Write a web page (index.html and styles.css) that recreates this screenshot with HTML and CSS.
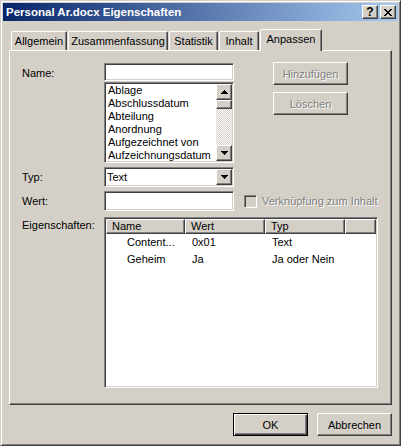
FILE: index.html
```html
<!DOCTYPE html>
<html lang="de">
<head>
    <meta charset="UTF-8">
    <title>Personal Ar.docx Eigenschaften</title>
    <link rel="stylesheet" href="styles.css">
</head>
<body>

<div class="window">

    <div class="titlebar">
        <span class="title">Personal Ar.docx Eigenschaften</span>
        <div class="caption-btns">
            <span class="cap-btn raised">?</span>
            <span class="cap-btn raised">
                <svg width="8" height="7" viewBox="0 0 8 7"><path d="M0 0h2v1H0zM6 0h2v1H6zM1 1h2v1H1zM5 1h2v1H5zM2 2h4v1H2zM3 3h2v1H3zM2 4h4v1H2zM1 5h2v1H1zM5 5h2v1H5zM0 6h2v1H0zM6 6h2v1H6z" fill="#000"/></svg>
            </span>
        </div>
    </div>

    <div class="dialog">

        <!-- Registerkarten -->
        <div class="tabs">
            <div class="tab" style="width:56px">Allgemein</div>
            <div class="tab" style="width:100px">Zusammenfassung</div>
            <div class="tab" style="width:49px">Statistik</div>
            <div class="tab" style="width:40px">Inhalt</div>
            <div class="tab active" style="width:62px">Anpassen</div>
        </div>

        <div class="panel">

            <div class="name-block">
                <div class="label name-label">Name:</div>
                <div class="name-col">
                    <div class="field sunken name-field"></div>
                    <div class="listbox sunken">
                        <ul class="list-items">
                            <li>Ablage</li>
                            <li>Abschlussdatum</li>
                            <li>Abteilung</li>
                            <li>Anordnung</li>
                            <li>Aufgezeichnet von</li>
                            <li>Aufzeichnungsdatum</li>
                        </ul>
                        <div class="vscroll">
                            <div class="sb-btn raised">
                                <svg width="7" height="4" viewBox="0 0 7 4"><path d="M3 0h1v1h1v1h1v1h1v1H0V3h1V2h1V1h1z" fill="#000"/></svg>
                            </div>
                            <div class="sb-thumb raised"></div>
                            <div class="sb-track"></div>
                            <div class="sb-btn raised">
                                <svg width="7" height="4" viewBox="0 0 7 4"><path d="M0 0h7v1H6v1H5v1H4v1H3V3H2V2H1V1H0z" fill="#000"/></svg>
                            </div>
                        </div>
                    </div>
                </div>
                <div class="side-btns">
                    <button class="btn raised" disabled>Hinzufügen</button>
                    <button class="btn raised" disabled>Löschen</button>
                </div>
            </div>

            <div class="row">
                <div class="label">Typ:</div>
                <div class="select sunken">
                    <span class="select-value">Text</span>
                    <span class="sb-btn raised">
                        <svg width="7" height="4" viewBox="0 0 7 4"><path d="M0 0h7v1H6v1H5v1H4v1H3V3H2V2H1V1H0z" fill="#000"/></svg>
                    </span>
                </div>
            </div>

            <div class="row">
                <div class="label">Wert:</div>
                <div class="field sunken wert-field"></div>
                <span class="checkbox sunken"></span>
                <span class="disabled-text">Verknüpfung zum Inhalt</span>
            </div>

            <div class="row props-row">
                <div class="label props-label">Eigenschaften:</div>
                <div class="listview sunken">
                    <div class="lv-header">
                        <div class="lv-col raised col-name">Name</div>
                        <div class="lv-col raised col-wert">Wert</div>
                        <div class="lv-col raised col-typ">Typ</div>
                        <div class="lv-col raised col-rest"></div>
                    </div>
                    <div class="lv-row">
                        <div class="cell col-name">Content...</div>
                        <div class="cell col-wert">0x01</div>
                        <div class="cell col-typ">Text</div>
                    </div>
                    <div class="lv-row">
                        <div class="cell col-name">Geheim</div>
                        <div class="cell col-wert">Ja</div>
                        <div class="cell col-typ">Ja oder Nein</div>
                    </div>
                </div>
            </div>

        </div>

        <div class="footer">
            <button class="btn btn-default">OK</button>
            <button class="btn raised">Abbrechen</button>
        </div>

    </div>
</div>

</body>
</html>
```

FILE: styles.css
```css
/* Klassischer Windows-Dialog */
body {
    margin: 0;
    font-family: "Liberation Sans", Arial, sans-serif;
    font-size: 11px;
    color: #000;
    background: #d4d0c8;
}

/* --- 3D-Kanten --- */
.raised {
    box-sizing: border-box;
    background: #d4d0c8;
    border: 1px solid;
    border-color: #fff #404040 #404040 #fff;
    box-shadow: inset -1px -1px #808080, inset 1px 1px #d4d0c8;
}

.sunken {
    box-sizing: border-box;
    background: #fff;
    border: 1px solid;
    border-color: #808080 #fff #fff #808080;
    box-shadow: inset 1px 1px #404040, inset -1px -1px #d4d0c8;
    padding: 1px;
}

/* --- Fenster --- */
.window {
    width: 401px;
    height: 446px;
    box-sizing: border-box;
    padding: 2px;
    background: #d4d0c8;
    border: 1px solid;
    border-color: #d4d0c8 #404040 #404040 #d4d0c8;
    box-shadow: inset 1px 1px #fff, inset -1px -1px #808080;
}

.titlebar {
    height: 18px;
    display: flex;
    align-items: center;
    justify-content: space-between;
    padding: 0 2px 0 3px;
    background: linear-gradient(to right, #0a246a, #a6caf0);
}

.title {
    color: #fff;
    font-weight: bold;
    font-size: 11.5px;
}

.caption-btns {
    display: flex;
    gap: 2px;
}

.cap-btn {
    width: 16px;
    height: 14px;
    display: flex;
    align-items: center;
    justify-content: center;
    font-weight: bold;
    font-size: 12px;
}

.dialog {
    padding: 8px 6px 0;
}

/* --- Registerkarten --- */
.tabs {
    display: flex;
    align-items: flex-end;
    height: 21px;
    padding-left: 2px;
}

.tab {
    height: 19px;
    box-sizing: border-box;
    margin-right: 1px;
    border: 1px solid;
    border-color: #fff #404040 transparent #fff;
    border-bottom: none;
    border-radius: 2px 2px 0 0;
    box-shadow: inset -1px 0 #808080;
    background: #d4d0c8;
    text-align: center;
    line-height: 18px;
    white-space: nowrap;
}

.tab.active {
    position: relative;
    z-index: 1;
    height: 22px;
    margin-bottom: -1px;
    line-height: 19px;
}

.panel {
    height: 355px;
    box-sizing: border-box;
    border: 1px solid;
    border-color: #fff #404040 #404040 #fff;
    box-shadow: inset -1px -1px #808080;
    padding: 12px 12px 0;
}

/* --- Formular --- */
.label {
    width: 82px;
    flex: none;
}

.name-block {
    display: flex;
    align-items: flex-start;
}

.name-label {
    line-height: 20px;
}

.name-col {
    width: 130px;
    display: flex;
    flex-direction: column;
    gap: 1px;
}

.field {
    width: 130px;
    height: 20px;
}

.name-field {
    height: 18px;
}

.listbox {
    height: 81px;
    display: flex;
}

.list-items {
    list-style: none;
    margin: 0;
    padding: 0 0 0 2px;
    flex: 1;
    line-height: 13px;
    overflow: hidden;
    white-space: nowrap;
}

.vscroll {
    width: 16px;
    display: flex;
    flex-direction: column;
}

.sb-btn {
    width: 16px;
    height: 16px;
    flex: none;
    display: flex;
    align-items: center;
    justify-content: center;
}

.sb-thumb {
    height: 9px;
    flex: none;
}

.sb-track {
    flex: 1;
    background: repeating-conic-gradient(#fff 0 25%, #d4d0c8 0 50%) 0 0 / 2px 2px;
}

.side-btns {
    display: flex;
    flex-direction: column;
    gap: 7px;
    margin: -1px 0 0 39px;
}

.btn {
    width: 75px;
    height: 23px;
    padding: 0;
    font-family: inherit;
    font-size: 11px;
    color: #000;
}

.btn:disabled {
    color: #808080;
    text-shadow: 1px 1px #fff;
}

.btn-default {
    box-sizing: border-box;
    background: #d4d0c8;
    border: 1px solid #000;
    box-shadow: inset 1px 1px #fff, inset -1px -1px #404040, inset -2px -2px #808080;
}

.row {
    display: flex;
    align-items: center;
    margin-top: 4px;
}

.select {
    width: 130px;
    height: 20px;
    display: flex;
}

.select-value {
    flex: 1;
    padding-left: 1px;
    line-height: 16px;
}

.checkbox {
    width: 13px;
    height: 13px;
    margin-left: 10px;
    background: #d4d0c8;
}

.disabled-text {
    margin-left: 5px;
    color: #808080;
    text-shadow: 1px 1px #fff;
    white-space: nowrap;
}

/* --- Eigenschaftenliste --- */
.props-row {
    align-items: flex-start;
    margin-top: 6px;
}

.props-label {
    padding-top: 2px;
}

.listview {
    width: 274px;
    height: 171px;
}

.lv-header {
    display: flex;
    height: 15px;
}

.lv-col {
    height: 15px;
    padding-left: 5px;
    line-height: 13px;
    flex: none;
}

.col-name { width: 79px; }
.col-wert { width: 80px; }
.col-typ  { width: 80px; }
.col-rest { flex: 1; }

.lv-row {
    display: flex;
    height: 17px;
    line-height: 17px;
}

.cell {
    flex: none;
    padding-left: 7px;
    box-sizing: border-box;
    white-space: nowrap;
}

.cell.col-name {
    padding-left: 21px;
}

/* --- Schaltflächen unten --- */
.footer {
    display: flex;
    justify-content: flex-end;
    gap: 9px;
    margin-top: 8px;
}
```
